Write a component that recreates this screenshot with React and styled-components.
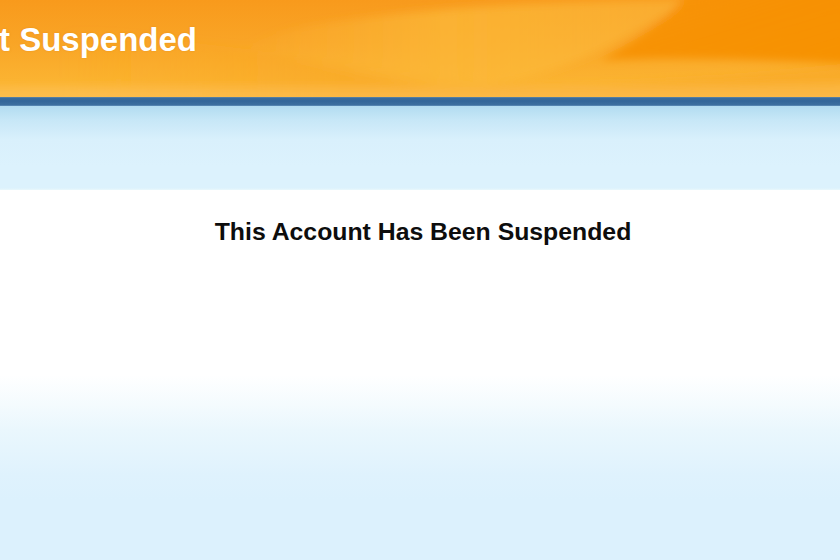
import styled, { createGlobalStyle } from "styled-components";

const GlobalStyle = createGlobalStyle`
  html, body {
    margin: 0;
    padding: 0;
    background: #dcf1fd;
  }
  body {
    font-family: "Liberation Sans", Arial, sans-serif;
  }
`;

const Page = styled.div`
  width: 840px;
  height: 560px;
  overflow: hidden;
  display: flex;
  flex-direction: column;
  background: linear-gradient(
    to bottom,
    #ffffff 0px,
    #ffffff 375px,
    #f4fbfe 405px,
    #eaf7fd 430px,
    #dff2fd 475px,
    #dcf1fd 500px,
    #dcf1fd 560px
  );
`;

const Header = styled.header`
  position: relative;
  height: 97px;
  overflow: hidden;
  background: linear-gradient(to bottom, #f89a1c 0%, #f9a526 45%, #fbb432 85%, #fdbd4a 100%);
`;

const Waves = styled.svg`
  position: absolute;
  inset: 0;
  width: 100%;
  height: 100%;
`;

const Title = styled.h1`
  position: relative;
  margin: 0;
  padding-top: 18px;
  font-size: 33px;
  line-height: 44px;
  font-weight: bold;
  color: #ffffff;
  white-space: nowrap;
  text-indent: -122px;
  text-shadow: 0 0 2px rgba(200, 110, 0, 0.35);
`;

const Stripe = styled.div`
  height: 9px;
  background: linear-gradient(to bottom, #6d8fa8 0px, #3a6c9c 1px, #336699 4px, #3c6f9f 8px, #6a98c2 9px);
`;

const Band = styled.div`
  height: 84px;
  background: linear-gradient(to bottom, #b2dcf1 0px, #c7e7f7 14px, #d9f0fc 34px, #dcf2fd 60px, #dcf2fd 82px, #e9f8fc 84px);
`;

const Main = styled.main`
  display: flex;
  justify-content: center;
  padding: 27px 0 0 6px;
`;

const Message = styled.h2`
  margin: 0;
  font-size: 24.8px;
  line-height: 30px;
  font-weight: bold;
  color: #0d0d0d;
`;

export default function App() {
  return (
    <>
      <GlobalStyle />
      <Page>
        <Header>
          <Waves viewBox="0 0 840 97" preserveAspectRatio="none">
            <defs>
              <filter id="soft" x="-10%" y="-20%" width="120%" height="140%">
                <feGaussianBlur stdDeviation="4" />
              </filter>
              <linearGradient id="w0" x1="0" y1="0" x2="1" y2="0">
                <stop offset="0" stopColor="#f9a623" stopOpacity="0" />
                <stop offset="0.35" stopColor="#f9a623" stopOpacity="0.5" />
                <stop offset="1" stopColor="#f9a623" stopOpacity="0.5" />
              </linearGradient>
              <linearGradient id="w1" x1="0" y1="0" x2="1" y2="0">
                <stop offset="0" stopColor="#fbb83c" stopOpacity="0" />
                <stop offset="0.45" stopColor="#fcb838" stopOpacity="0.75" />
                <stop offset="1" stopColor="#fcbc40" stopOpacity="0.5" />
              </linearGradient>
              <linearGradient id="w2" x1="0" y1="0" x2="1" y2="1">
                <stop offset="0" stopColor="#f78f00" stopOpacity="0.6" />
                <stop offset="0.5" stopColor="#f79000" stopOpacity="0.9" />
                <stop offset="1" stopColor="#f79200" stopOpacity="1" />
              </linearGradient>
            </defs>
            <g filter="url(#soft)">
              <path
                d="M60 30 C 250 45, 380 70, 470 82 C 560 92, 700 80, 850 66 L 850 100 L 60 100 Z"
                fill="url(#w0)"
              />
              <path
                d="M300 28 C 400 10, 520 2, 690 0 C 640 30, 580 70, 490 86 C 420 92, 340 70, 240 48 C 260 40, 280 32, 300 28 Z"
                fill="url(#w1)"
              />
              <path
                d="M690 -10 L 850 -10 L 850 64 C 780 60, 680 56, 600 60 C 640 40, 670 15, 690 -10 Z"
                fill="url(#w2)"
              />
              <path
                d="M-10 88 C 200 86, 500 90, 850 84 L 850 100 L -10 100 Z"
                fill="#fdc054"
                opacity="0.45"
              />
            </g>
          </Waves>
          <Title>Account Suspended</Title>
        </Header>
        <Stripe />
        <Band />
        <Main>
          <Message>This Account Has Been Suspended</Message>
        </Main>
      </Page>
    </>
  );
}
